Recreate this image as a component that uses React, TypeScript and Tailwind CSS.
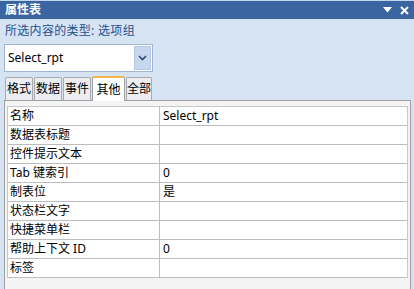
import React from "react";

const rows: [string, string][] = [
  ["名称", "Select_rpt"],
  ["数据表标题", ""],
  ["控件提示文本", ""],
  ["Tab 键索引", "0"],
  ["制表位", "是"],
  ["状态栏文字", ""],
  ["快捷菜单栏", ""],
  ["帮助上下文 ID", "0"],
  ["标签", ""],
];

const tabs = ["格式", "数据", "事件", "其他", "全部"];

export default function App() {
  return (
    <div
      className="w-[414px] h-[289px] overflow-hidden bg-[#d6e3f3] flex flex-col text-[12px]"
      style={{ fontFamily: '"Noto Sans", "Noto Sans CJK SC", sans-serif' }}
    >
      <div className="h-px bg-[#c3d5ec]" />
      <div className="h-[18px] bg-[#3b65a1] flex items-center justify-between pl-[5px] pr-[5px]">
        <span className="text-white font-bold text-[12px] leading-none">属性表</span>
        <div className="flex items-center gap-[8px]">
          <svg width="9" height="6" viewBox="0 0 9 6">
            <path d="M0 0 H9 L4.5 5.5 Z" fill="white" />
          </svg>
          <svg width="9" height="9" viewBox="0 0 9 9">
            <path d="M1 1 L8 8 M8 1 L1 8" stroke="white" strokeWidth="2" />
          </svg>
        </div>
      </div>
      <div className="pl-[5px] pt-[4px] h-[25px] text-[#27508e] leading-[16px] text-[12px] tracking-[0.3px]">
        所选内容的类型: 选项组
      </div>
      <div className="pl-[4px]">
        <div className="w-[149px] h-[28px] bg-white border border-[#9fb4d0] flex items-center justify-between pl-[3px] pr-[1px]">
          <span className="text-[12px] text-black">Select_rpt</span>
          <div className="w-[17px] h-[24px] bg-[#c7d8ee] border border-[#b4c8e3] flex items-center justify-center">
            <svg width="9" height="6" viewBox="0 0 9 6">
              <path d="M1 1 L4.5 4.5 L8 1" stroke="#2a4a7a" strokeWidth="1.6" fill="none" />
            </svg>
          </div>
        </div>
      </div>
      <div className="pl-[5px] mt-[3px] flex items-end h-[25px]">
        {tabs.map((t) => {
          const active = t === "其他";
          return active ? (
            <div
              key={t}
              className="h-[25px] w-[33px] mr-px bg-white border border-b-0 border-[#a0a0a0] border-t-2 border-t-[#f5b44a] rounded-t-[2px] flex items-center justify-center text-[12px] text-black leading-none -mb-px relative z-10"
            >
              {t}
            </div>
          ) : (
            <div
              key={t}
              className={
                t === "全部"
                  ? "h-[23px] w-[26px] mr-px bg-[#ebedf0] border border-b-0 border-[#a7abb0] rounded-t-[2px] flex items-center justify-center text-[12px] text-black leading-none"
                  : "h-[23px] w-[28px] mr-px bg-[#ebedf0] border border-b-0 border-[#a7abb0] rounded-t-[2px] flex items-center justify-center text-[12px] text-black leading-none"
              }
            >
              {t}
            </div>
          );
        })}
      </div>
      <div className="ml-[4px] mr-[3px] flex-1 bg-[#f4f4f4] border-l border-t border-r border-[#a0a0a0] pl-[2px] pr-[2px] pt-[5px]">
        <div className="bg-white border-t border-l border-r border-[#c8c8c8]">
          {rows.map(([k, v]) => (
            <div key={k} className="flex h-[19px] border-b border-[#bdbdbd]">
              <div className="w-[152px] border-r border-[#bdbdbd] pl-[2px] text-black leading-[18px] whitespace-nowrap">
                {k}
              </div>
              <div className="flex-1 pl-[3px] text-black leading-[18px]">{v}</div>
            </div>
          ))}
        </div>
      </div>
    </div>
  );
}
